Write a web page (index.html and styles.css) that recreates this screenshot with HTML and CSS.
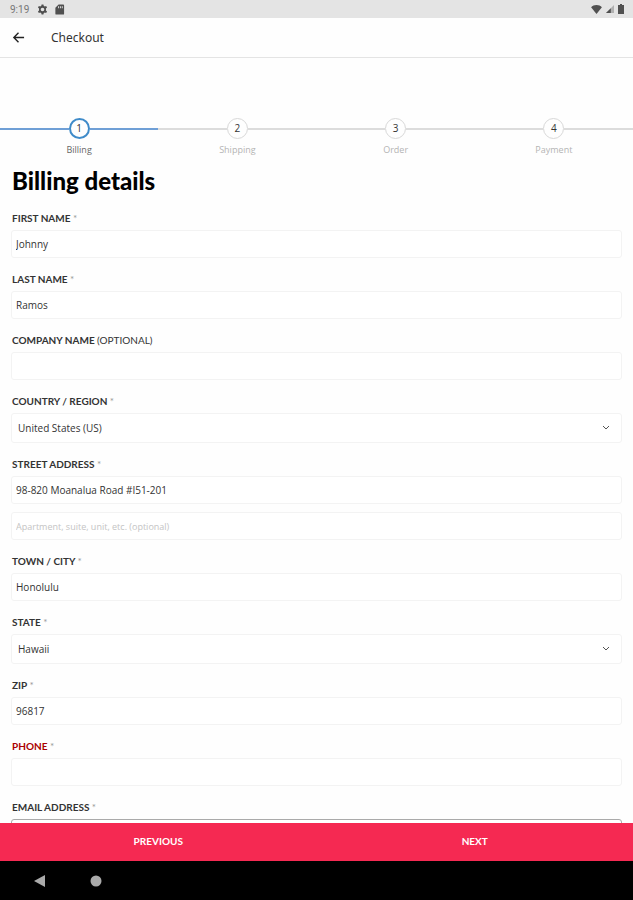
FILE: index.html
```html
<!DOCTYPE html>
<html lang="en">
<head>
    <meta charset="UTF-8" />
    <meta name="viewport" content="width=device-width, initial-scale=1" />
    <title>Checkout</title>
    <link rel="stylesheet" href="styles.css">
</head>
<body>
    <div class="status-bar">
        <span class="clock">9:19</span>
        <svg class="status-icon" viewBox="0 0 24 24"><path fill-rule="evenodd" d="M10 1h4l.6 3 2.400 1.400 2.900-1 2 3.500L19.600 10v4l2.300 2.100-2 3.500-2.900-1-2.400 1.400-.6 3h-4l-.6-3L7 18.600l-2.900 1-2-3.500L4.400 14v-4L2.100 7.900l2-3.500 2.900 1L9.400 4zM12 8a4 4 0 1 0 0 8 4 4 0 0 0 0-8z"/></svg>
        <svg class="status-icon" viewBox="0 0 24 24"><path fill-rule="evenodd" d="M20 1H10L3 8v13a2 2 0 0 0 2 2h15a2 2 0 0 0 2-2V3a2 2 0 0 0-2-2zM9 9h2V5H9zm4 0h2V5h-2zm4 0h2V5h-2z"/></svg>
        <span class="status-right">
            <svg class="wifi" viewBox="0 0 24 20"><path d="M12 20L0 5C3 2 7 0 12 0s9 2 12 5z"/></svg>
            <svg class="signal" viewBox="0 0 20 20"><path opacity=".35" d="M0 20L20 0v20z"/><path d="M0 20L12 8v12z"/></svg>
            <svg class="battery" viewBox="0 0 12 20"><path d="M4 0h4v2h4v18H0V2h4z"/></svg>
        </span>
    </div>

    <header class="app-bar">
        <button type="button" class="back" aria-label="Back">
            <svg viewBox="0 0 14 14"><path d="M13 7H2M7 2L2 7l5 5"/></svg>
        </button>
        <span class="app-title">Checkout</span>
    </header>

    <main class="content">
        <ol class="steps">
            <li class="step active"><div class="track"><span class="number">1</span></div>Billing</li>
            <li class="step"><div class="track"><span class="number">2</span></div>Shipping</li>
            <li class="step"><div class="track"><span class="number">3</span></div>Order</li>
            <li class="step"><div class="track"><span class="number">4</span></div>Payment</li>
        </ol>

        <form id="billing_form" class="billing">
            <h1>Billing details</h1>

            <div class="field">
                <label for="first_name">FIRST NAME <span class="star">*</span></label>
                <input type="text" id="first_name" value="Johnny">
            </div>
            <div class="field">
                <label for="last_name">LAST NAME <span class="star">*</span></label>
                <input type="text" id="last_name" value="Ramos">
            </div>
            <div class="field">
                <label for="company">COMPANY NAME <span class="optional">(OPTIONAL)</span></label>
                <input type="text" id="company">
            </div>
            <div class="field">
                <label for="country">COUNTRY / REGION <span class="star">*</span></label>
                <div class="select">
                    <select id="country"><option>United States (US)</option></select>
                    <svg viewBox="0 0 8 6"><path d="M1 1l3 3 3-3"/></svg>
                </div>
            </div>
            <div class="field">
                <label for="street">STREET ADDRESS <span class="star">*</span></label>
                <input type="text" id="street" value="98-820 Moanalua Road #I51-201">
                <input type="text" class="second-line" id="street_2" aria-label="Apartment" placeholder="Apartment, suite, unit, etc. (optional)">
            </div>
            <div class="field">
                <label for="city">TOWN / CITY <span class="star">*</span></label>
                <input type="text" id="city" value="Honolulu">
            </div>
            <div class="field">
                <label for="state">STATE <span class="star">*</span></label>
                <div class="select">
                    <select id="state"><option>Hawaii</option></select>
                    <svg viewBox="0 0 8 6"><path d="M1 1l3 3 3-3"/></svg>
                </div>
            </div>
            <div class="field">
                <label for="zip">ZIP <span class="star">*</span></label>
                <input type="text" id="zip" value="96817">
            </div>
            <div class="field invalid">
                <label for="phone">PHONE <span class="star">*</span></label>
                <input type="tel" id="phone">
            </div>
            <div class="field current">
                <label for="email">EMAIL ADDRESS <span class="star">*</span></label>
                <input type="email" id="email">
            </div>
        </form>
    </main>

    <div class="actions">
        <button type="button">PREVIOUS</button>
        <button type="button">NEXT</button>
    </div>

    <nav class="system-nav">
        <button type="button" aria-label="System back"><svg viewBox="0 0 12 12"><path d="M12 0v12L1 6z"/></svg></button>
        <button type="button" aria-label="Home"><svg viewBox="0 0 12 12"><circle cx="6" cy="6" r="5.500"/></svg></button>
    </nav>
</body>
</html>
```

FILE: styles.css
```css
* {
    box-sizing: border-box;
}

body {
    margin: 0;
    height: 100vh;
    display: flex;
    flex-direction: column;
    overflow: hidden;
    background: #fefefe;
    color: #333;
    font-family: "Open Sans", "Noto Sans", sans-serif;
    font-size: 9px;
}

button {
    padding: 0;
    border: none;
    background: none;
    font: inherit;
    cursor: pointer;
}

/* status bar */
.status-bar {
    flex: none;
    display: flex;
    align-items: center;
    gap: 6px;
    height: 18px;
    padding: 0 9px 0 10px;
    background: #e4e4e4;
    color: #777;
    font-family: Roboto, sans-serif;
    font-size: 10px;
}

.status-bar svg {
    fill: #505050;
}

.status-icon {
    width: 11px;
    height: 11px;
}

.clock {
    margin-right: 2px;
}

.status-right {
    display: flex;
    align-items: center;
    gap: 4px;
    margin-left: auto;
}

.wifi {
    width: 11px;
    height: 9px;
}

.signal {
    width: 8px;
    height: 8px;
}

.battery {
    width: 6px;
    height: 10px;
}

/* app bar */
.app-bar {
    flex: none;
    display: flex;
    align-items: center;
    gap: 26px;
    height: 40px;
    padding: 0 12px;
    border-bottom: 1px solid #e4e4e4;
}

.back svg {
    display: block;
    width: 13px;
    height: 13px;
    fill: none;
    stroke: #222;
    stroke-width: 1.500;
}

.app-title {
    font-family: "Noto Sans", sans-serif;
    font-size: 12px;
}

/* page */
.content {
    flex: 1;
    min-height: 0;
    overflow: hidden;
}

.steps {
    display: grid;
    grid-template-columns: repeat(4, 1fr);
    margin: 60px 0 0;
    padding: 0;
    list-style: none;
}

.step {
    text-align: center;
    line-height: 12px;
    color: #b4b4b4;
}

.track {
    display: flex;
    align-items: center;
    margin-bottom: 5px;
}

.track::before,
.track::after {
    content: "";
    flex: 1;
    height: 2px;
    background: #dcdcdc;
}

.number {
    width: 21px;
    height: 21px;
    border: 1px solid #d8d8d8;
    border-radius: 50%;
    font-size: 10px;
    line-height: 19px;
    color: #333;
}

.active {
    color: #666;
}

.active .track::before,
.active .track::after {
    background: #6f9fd6;
}

.active .number {
    border: 2px solid #3f8bc9;
    line-height: 17px;
}

.billing {
    padding: 11px 11px 0;
}

h1 {
    margin: 0 0 17px;
    padding-left: 1px;
    font-family: Lato, sans-serif;
    font-size: 24px;
    font-weight: 900;
    line-height: 28px;
    color: #000;
}

.field {
    display: flex;
    flex-direction: column;
    margin-bottom: 15px;
}

label {
    margin-bottom: 6px;
    padding-left: 1px;
    font-family: Lato, sans-serif;
    font-size: 10px;
    font-weight: 700;
    line-height: 12px;
}

.star {
    font-weight: 400;
    color: #999;
}

.optional {
    font-weight: 400;
}

input,
select {
    width: 100%;
    height: 28px;
    padding: 0 4px;
    border: 1px solid #f3f3f3;
    border-radius: 3px;
    background: #fff;
    color: #333;
    font: inherit;
    font-size: 10px;
}

input::placeholder {
    color: #c4c4c4;
    font-size: 9px;
}

.second-line {
    margin-top: 8px;
}

.select {
    display: grid;
    align-items: center;
}

.select > * {
    grid-area: 1 / 1;
}

.select select {
    height: 30px;
    padding: 0 6px;
    appearance: none;
}

.select svg {
    justify-self: end;
    width: 8px;
    height: 6px;
    margin-right: 12px;
    fill: none;
    stroke: #555;
    pointer-events: none;
}

.invalid label {
    color: #a00;
}

.current input {
    border-color: #aaa;
}

/* bottom buttons */
.actions {
    flex: none;
    display: grid;
    grid-template-columns: 1fr 1fr;
    height: 38px;
    background: #f52952;
}

.actions button {
    padding-bottom: 3px;
    color: #fff;
    font-family: Lato, sans-serif;
    font-size: 10px;
    font-weight: 700;
}

.system-nav {
    flex: none;
    display: flex;
    align-items: center;
    gap: 45px;
    height: 39px;
    padding: 0 33px;
    background: #000;
}

.system-nav svg {
    display: block;
    width: 12px;
    height: 12px;
    fill: #aaa;
}
```
